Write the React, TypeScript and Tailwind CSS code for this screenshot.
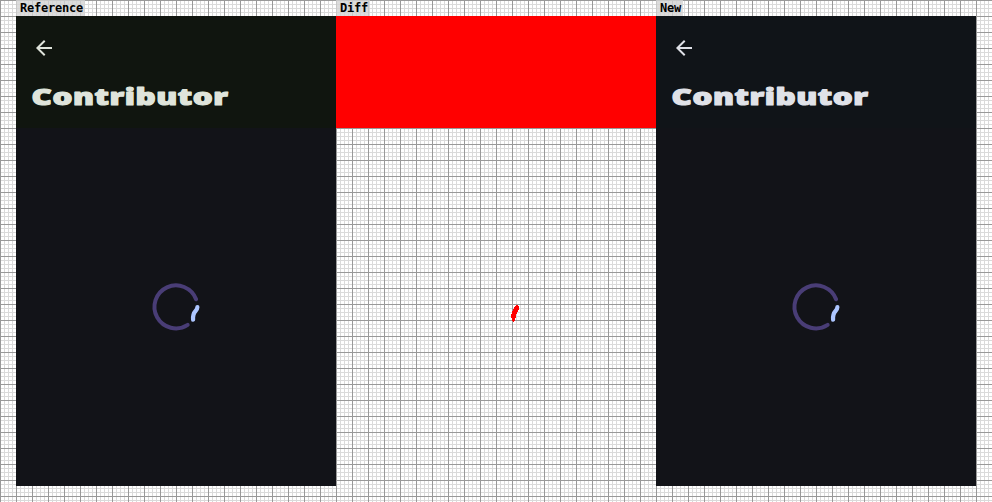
const GRID =
  "bg-[image:linear-gradient(to_right,#999999_1px,transparent_1px),linear-gradient(to_bottom,#999999_1px,transparent_1px),linear-gradient(to_right,#dadada_1px,transparent_1px),linear-gradient(to_bottom,#dadada_1px,transparent_1px)] bg-[size:16px_16px,16px_16px,4px_4px,4px_4px]";

function Label({ text, width }: { text: string; width: string }) {
  return (
    <div className="h-4 w-80">
      <div
        className={`h-4 ${width} bg-[#d3d3d3]/80 pl-1 font-['DejaVu_Sans_Mono',monospace] text-[12px] leading-4 font-bold tracking-[-0.22px] whitespace-nowrap text-black`}
      >
        {text}
      </div>
    </div>
  );
}

function Spinner() {
  return (
    <svg width="60" height="60" viewBox="0 0 60 60" fill="none" strokeLinecap="round">
      <path d="M50.1 22.3A21.5 21.5 0 1 0 41.7 47.9" stroke="#493d76" strokeWidth="4" />
      <path d="M51.4 30.2C51.2 35 46.3 33.5 47.1 42.7" stroke="#adc6ff" strokeWidth="4.2" />
    </svg>
  );
}

function Screen({ header, ink }: { header: string; ink: string }) {
  return (
    <div className={`flex h-[470px] w-80 flex-col bg-[#121318] ${ink}`}>
      <div className={`h-28 shrink-0 px-4 pt-5 ${header}`}>
        <svg width="24" height="24" viewBox="0 0 24 24" fill="currentColor">
          <path d="M20 11H7.83l5.59-5.59L12 4l-8 8 8 8 1.41-1.41L7.83 13H20v-2z" />
        </svg>
        <svg
          className="mt-5 block overflow-visible"
          width="220"
          height="32"
          fill="currentColor"
          stroke="currentColor"
          strokeWidth="1.15"
          strokeLinejoin="round"
        >
          <text
            x="-0.4"
            y="25"
            textLength="197"
            lengthAdjust="spacingAndGlyphs"
            className="font-['Noto_Sans',sans-serif] text-[23.5px] font-black tracking-[0.4px]"
          >
            Contributor
          </text>
        </svg>
      </div>
      <div className="flex grow items-center justify-center">
        <Spinner />
      </div>
    </div>
  );
}

function Diff() {
  return (
    <div className="h-[470px] w-80">
      <div className="h-28 bg-[#ff0000]" />
      <div className="flex h-[358px] items-center justify-center">
        <svg width="60" height="60" viewBox="0 0 60 60" shapeRendering="crispEdges" fill="#ff0000">
          <path d="M50 28h2v1h1v4h-1v2h-1v2h-1v4h-1v3h-1v1h-1v-1h-1v-3h-1v-4h1v-3h1v-2h1v-2h1v-1h1z" />
        </svg>
      </div>
    </div>
  );
}

export default function App() {
  return (
    <div className={`h-[502px] w-[992px] overflow-hidden bg-white px-4 ${GRID}`}>
      <div className="flex">
        <Label text="Reference" width="w-[69px]" />
        <Label text="Diff" width="w-[34px]" />
        <Label text="New" width="w-[27px]" />
      </div>
      <div className="flex">
        <Screen header="bg-[#10150f]" ink="text-[#dfe4db]" />
        <Diff />
        <Screen header="bg-[#101418]" ink="text-[#e0e2e8]" />
      </div>
    </div>
  );
}
